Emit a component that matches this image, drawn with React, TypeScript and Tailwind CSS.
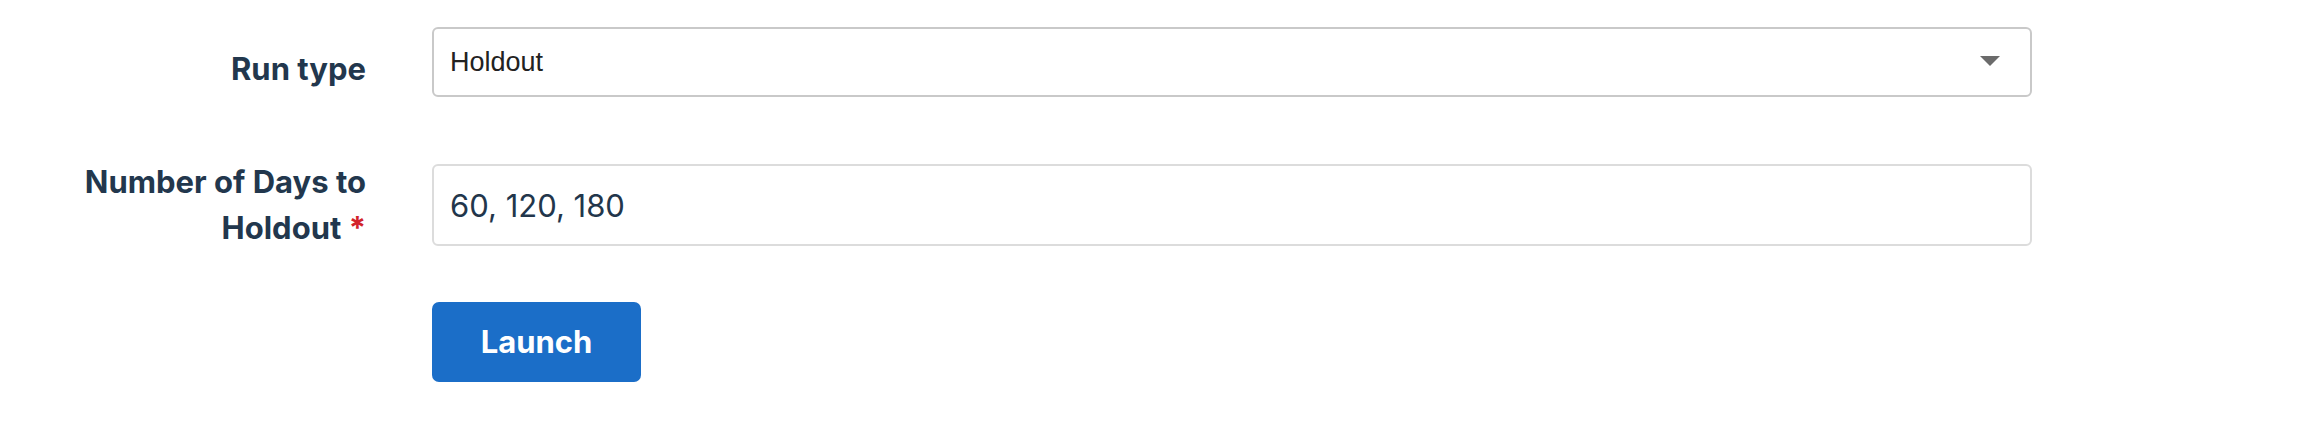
import React from "react";

const labelClass =
	"w-[366px] shrink-0 text-right font-['Inter',sans-serif] font-bold text-[31px] leading-[46px] text-[#22374d]";

const App: React.FC = () => {
	return (
		<div className="w-[2312px] h-[422px] bg-white pt-[27px]">
			{/* Run type */}
			<div className="flex items-start gap-x-[66px]">
				<label className={`${labelClass} pt-[19px]`}>Run type</label>
				<div className="relative w-[1600px]">
					<select
						defaultValue="holdout"
						className="appearance-none w-full h-[70px] rounded-[6px] border-2 border-[#c9c9c9] bg-white pl-[16px] pr-[60px] font-['Liberation_Sans',Arial,sans-serif] text-[27px] text-[#222222] outline-none"
					>
						<option value="holdout">Holdout</option>
						<option value="backtest">Backtest</option>
					</select>
					<svg
						className="pointer-events-none absolute right-[32px] top-[29px]"
						width="20"
						height="10"
						viewBox="0 0 20 10"
					>
						<path d="M0 0 L20 0 L10 10 Z" fill="#6b6b6b" />
					</svg>
				</div>
			</div>

			{/* Number of days */}
			<div className="flex items-center gap-x-[66px] mt-[62px]">
				<label className={labelClass}>
					Number of Days to
					<br />
					Holdout <span className="text-[#d2232a]">*</span>
				</label>
				<input
					readOnly
					defaultValue="60, 120, 180"
					className="w-[1600px] h-[82px] rounded-[6px] border-2 border-[#dcdcdc] bg-white pl-[16px] font-['Inter',sans-serif] text-[31px] text-[#22364b] outline-none"
				/>
			</div>

			{/* Launch */}
			<div className="flex mt-[51px] pl-[432px]">
				<button className="w-[209px] h-[80px] rounded-[7px] bg-[#1b6ec8] text-white font-['Inter',sans-serif] font-bold text-[31px]">
					Launch
				</button>
			</div>
		</div>
	);
};

export default App;
